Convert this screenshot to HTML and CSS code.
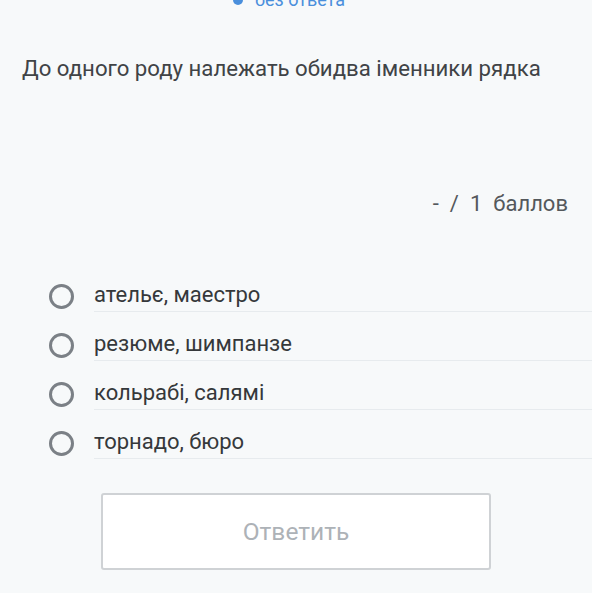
FILE: index.html
```html
<!DOCTYPE html>
<html lang="uk">
<head>
    <meta charset="UTF-8">
    <meta name="viewport" content="width=device-width, initial-scale=1.0">
    <title>Питання</title>
    <link rel="stylesheet" href="styles.css">
</head>
<body>
    <div class="status">
        <span class="status-dot"></span>
        <span class="status-text">без ответа</span>
    </div>

    <h1 class="question">До одного роду належать обидва іменники рядка</h1>

    <div class="score">
        <span>-</span>
        <span>/</span>
        <span>1</span>
        <span>баллов</span>
    </div>

    <ul class="options">
        <li class="option">
            <span class="radio"></span>
            <span class="option-label">ательє, маестро</span>
        </li>
        <li class="option">
            <span class="radio"></span>
            <span class="option-label">резюме, шимпанзе</span>
        </li>
        <li class="option">
            <span class="radio"></span>
            <span class="option-label">кольрабі, салямі</span>
        </li>
        <li class="option">
            <span class="radio"></span>
            <span class="option-label">торнадо, бюро</span>
        </li>
    </ul>

    <div class="actions">
        <button class="answer-btn" disabled>Ответить</button>
    </div>
</body>
</html>
```

FILE: styles.css
```css
body {
    margin: 0;
    font-family: Roboto, "Noto Sans", Arial, sans-serif;
    background-color: #f7f9fa;
    color: #3c3f42;
    overflow: hidden;
}

.status {
    display: flex;
    justify-content: center;
    align-items: center;
    gap: 12px;
    margin-top: -10px;
    padding-right: 14px;
    color: #4a8fdc;
    font-size: 18px;
    line-height: 20px;
}

.status-dot {
    width: 10px;
    height: 10px;
    border-radius: 50%;
    background-color: #4a8fdc;
}

.question {
    margin: 44px 0 0;
    padding: 0 22px;
    font-size: 22.2px;
    font-weight: normal;
    line-height: 28px;
    color: #404346;
}

.score {
    display: flex;
    justify-content: flex-end;
    gap: 11px;
    margin-top: 109px;
    padding-right: 24px;
    font-size: 22px;
    line-height: 26px;
    color: #54585c;
}

.options {
    list-style: none;
    margin: 46px 0 0;
    padding: 0 0 0 49px;
}

.option {
    display: flex;
    align-items: flex-end;
}

.radio {
    flex: none;
    width: 19px;
    height: 19px;
    border: 3px solid #7b8086;
    border-radius: 50%;
    margin-bottom: 3px;
}

.option-label {
    flex: 1;
    margin-left: 20px;
    padding: 19px 0 4px;
    font-size: 22px;
    line-height: 25px;
    color: #35383b;
    border-bottom: 1px solid #e7ebee;
}

.actions {
    display: flex;
    justify-content: center;
    margin-top: 34px;
}

.answer-btn {
    width: 390px;
    height: 77px;
    background-color: #fff;
    border: 2px solid #cfd2d5;
    border-radius: 3px;
    font-family: inherit;
    font-size: 24.5px;
    color: #adb2b7;
}
```
